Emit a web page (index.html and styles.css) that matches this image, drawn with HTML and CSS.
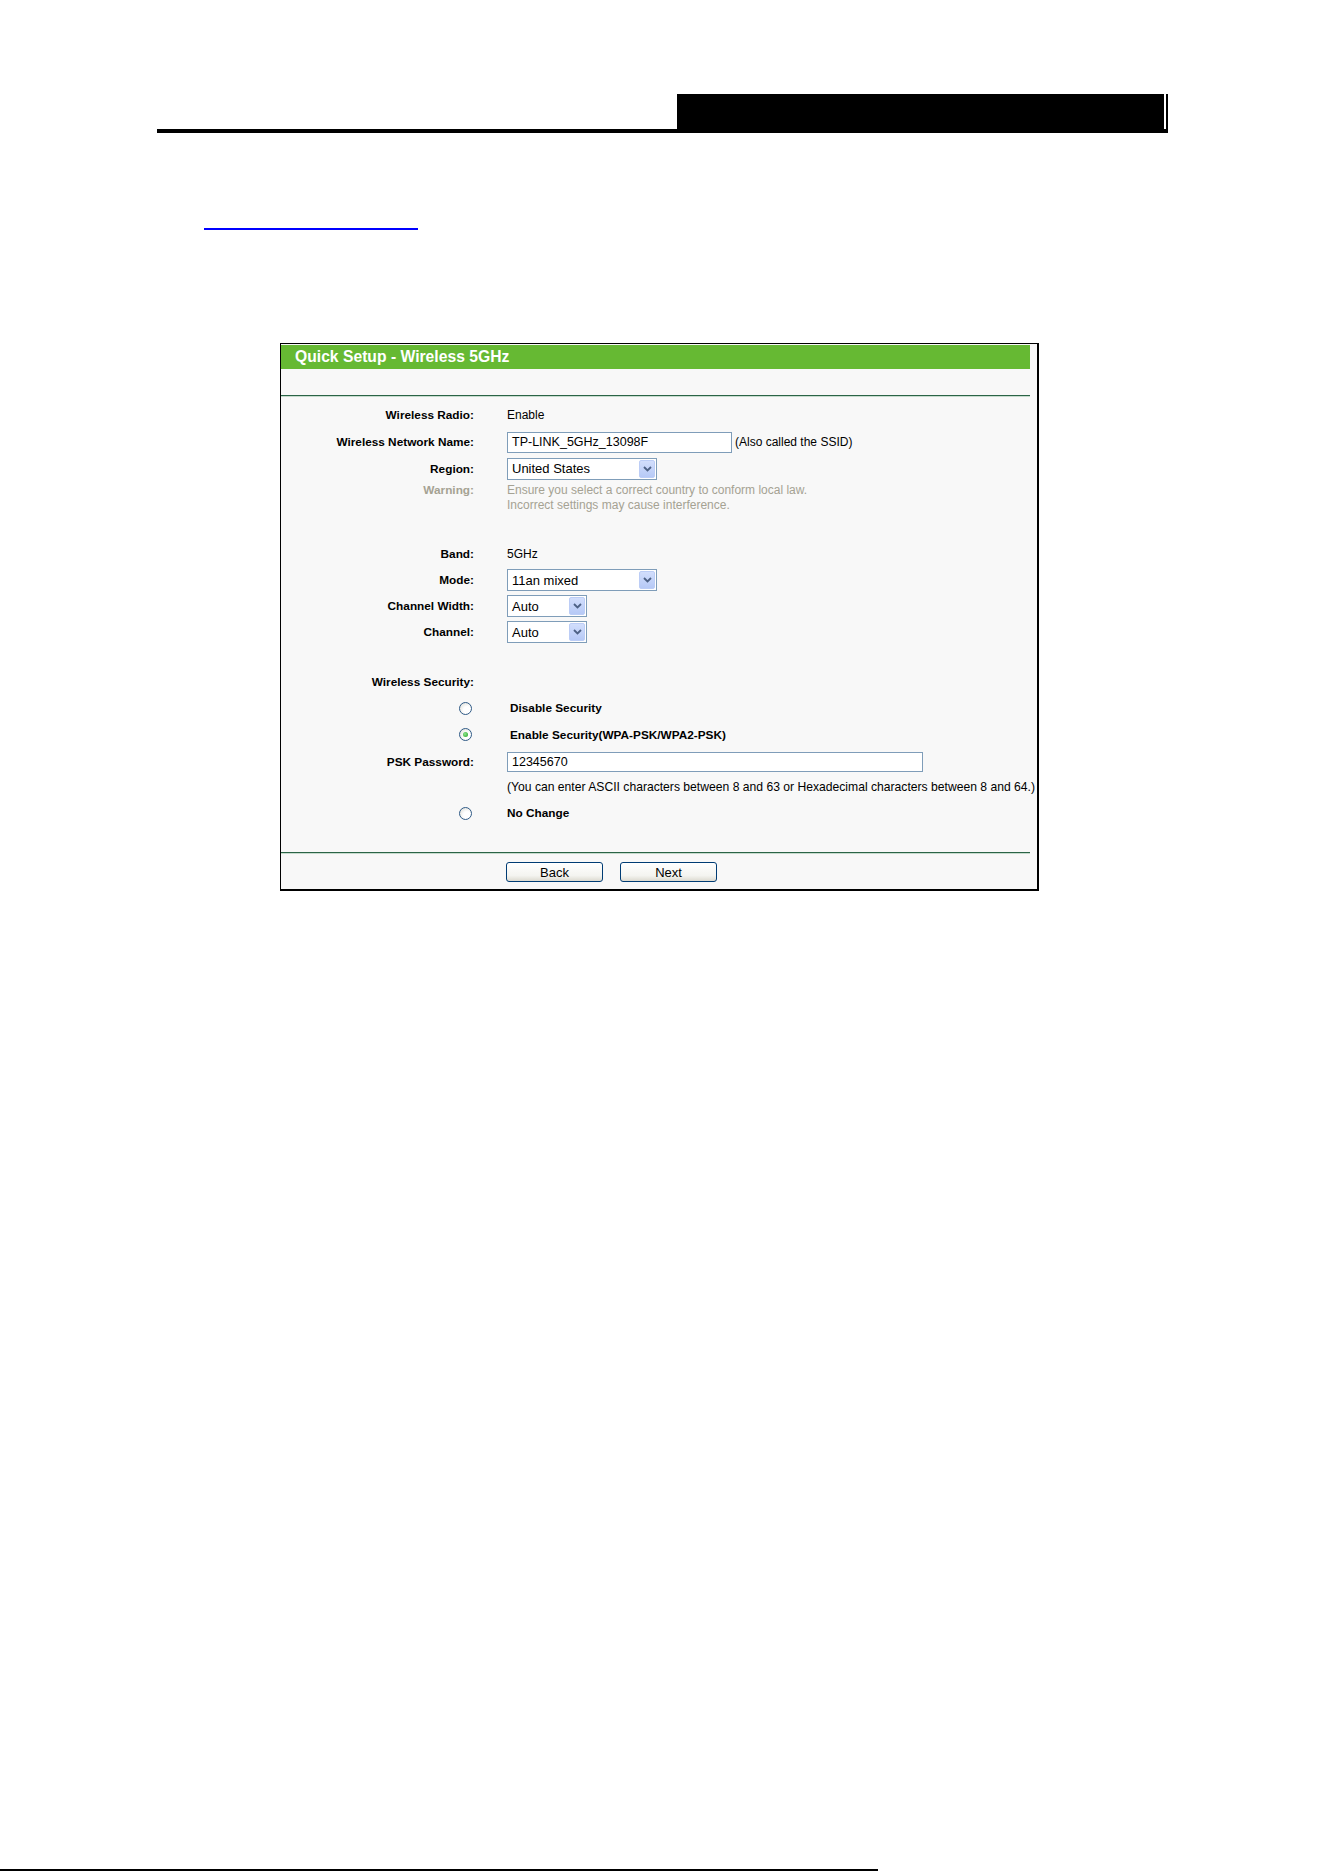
FILE: index.html
```html
<!DOCTYPE html>
<html lang="en">
<head>
    <meta charset="UTF-8">
    <meta name="viewport" content="width=device-width, initial-scale=1.0">
    <title>Quick Setup - Wireless 5GHz</title>
    <link rel="stylesheet" href="styles.css">
</head>
<body>
<div class="page">
    <header class="doc-head">
        <div class="doc-head__tab">
            <span class="doc-head__fill"></span>
            <span class="doc-head__edge"></span>
        </div>
    </header>

    <a class="doc-link" href="#"></a>

    <div class="frame">
        <div class="frame-title">Quick Setup - Wireless 5GHz</div>
        <div class="frame-rule frame-rule--top"></div>

        <div class="form">
            <div class="row row-radio">
                <span class="row__label">Wireless Radio:</span>
                <span class="row__value">Enable</span>
            </div>
            <div class="row row-wide">
                <span class="row__label">Wireless Network Name:</span>
                <span class="row__value">
                    <span class="field field--ssid">TP-LINK_5GHz_13098F</span>
                    <span class="field-note">(Also called the SSID)</span>
                </span>
            </div>
            <div class="row row-short">
                <span class="row__label">Region:</span>
                <span class="row__value">
                    <span class="select">
                        <span class="select__text">United States</span>
                        <span class="select__btn"><svg width="9" height="6" viewBox="0 0 9 6"><path d="M1 1l3.5 3.5L8 1" fill="none" stroke="#4d6185" stroke-width="1.8"/></svg></span>
                    </span>
                </span>
            </div>
            <div class="row row-warn">
                <span class="row__label">Warning:</span>
                <span class="row__value row__value--block">Ensure you select a correct country to conform local law.<br>Incorrect settings may cause interference.</span>
            </div>

            <div class="row gap-band">
                <span class="row__label">Band:</span>
                <span class="row__value">5GHz</span>
            </div>
            <div class="row">
                <span class="row__label">Mode:</span>
                <span class="row__value">
                    <span class="select">
                        <span class="select__text">11an mixed</span>
                        <span class="select__btn"><svg width="9" height="6" viewBox="0 0 9 6"><path d="M1 1l3.5 3.5L8 1" fill="none" stroke="#4d6185" stroke-width="1.8"/></svg></span>
                    </span>
                </span>
            </div>
            <div class="row">
                <span class="row__label">Channel Width:</span>
                <span class="row__value">
                    <span class="select select--short">
                        <span class="select__text">Auto</span>
                        <span class="select__btn"><svg width="9" height="6" viewBox="0 0 9 6"><path d="M1 1l3.5 3.5L8 1" fill="none" stroke="#4d6185" stroke-width="1.8"/></svg></span>
                    </span>
                </span>
            </div>
            <div class="row">
                <span class="row__label">Channel:</span>
                <span class="row__value">
                    <span class="select select--short">
                        <span class="select__text">Auto</span>
                        <span class="select__btn"><svg width="9" height="6" viewBox="0 0 9 6"><path d="M1 1l3.5 3.5L8 1" fill="none" stroke="#4d6185" stroke-width="1.8"/></svg></span>
                    </span>
                </span>
            </div>

            <div class="row gap-sec">
                <span class="row__label">Wireless Security:</span>
                <span class="row__value"></span>
            </div>
            <div class="row">
                <span class="radio"></span>
                <span class="row__value opt">Disable Security</span>
            </div>
            <div class="row row-radio">
                <span class="radio radio--on"></span>
                <span class="row__value opt">Enable Security(WPA-PSK/WPA2-PSK)</span>
            </div>
            <div class="row row-wide">
                <span class="row__label">PSK Password:</span>
                <span class="row__value">
                    <span class="field field--psk">12345670</span>
                </span>
            </div>
            <div class="row row-note">
                <span></span>
                <span class="row__value hint">(You can enter ASCII characters between 8 and 63 or Hexadecimal characters between 8 and 64.)</span>
            </div>
            <div class="row row-last">
                <span class="radio"></span>
                <span class="row__value opt opt--flush">No Change</span>
            </div>
        </div>

        <div class="frame-rule"></div>
        <div class="actions">
            <button class="btn" type="button">Back</button>
            <button class="btn" type="button">Next</button>
        </div>
    </div>

    <footer class="doc-foot"></footer>
</div>
</body>
</html>
```

FILE: styles.css
```css
body {
    margin: 0;
    background: #fff;
    color: #000;
    font-family: "Liberation Sans", Arial, sans-serif;
}
.page {
    min-height: 1872px;
    display: flex;
    flex-direction: column;
}

/* page header: black tab over a thick rule */
.doc-head {
    margin: 94px 0 0 157px;
    width: 1011px;
    border-bottom: 4px solid #000;
    display: flex;
    justify-content: flex-end;
}
.doc-head__tab {
    width: 491px;
    height: 35px;
    display: flex;
}
.doc-head__fill {
    flex: 1;
    background: #000;
}
.doc-head__edge {
    width: 2px;
    margin-left: 2px;
    background: #000;
}

.doc-link {
    display: block;
    margin: 95px 0 0 204px;
    width: 214px;
    border-bottom: 2px solid #0000ff;
}

/* router setup frame */
.frame {
    margin: 113px 0 0 280px;
    width: 756px;
    border: 1px solid #000;
    border-width: 1px 2px 2px 1px;
    background: #f8f8f8;
    padding: 1px 0 7px;
    font-size: 12px;
}
.frame-title {
    width: 749px;
    height: 24px;
    line-height: 24px;
    box-sizing: border-box;
    padding-left: 14px;
    background: #66b933;
    color: #fff;
    font-size: 15.7px;
    font-weight: bold;
}
.frame-rule {
    width: 749px;
    height: 1px;
    background: #2b6447;
    border-bottom: 1px solid #c6dbcd;
}
.frame-rule--top {
    margin-top: 26px;
}

.form {
    padding: 4px 0 24px;
}
.row {
    display: grid;
    grid-template-columns: 193px 1fr;
    column-gap: 33px;
    align-items: center;
    height: 26px;
}
.row-radio { height: 27px; }
.row-wide { height: 28px; }
.row-short { height: 25px; }
.row-note { height: 22px; }
.row-last { height: 30px; }
.row-warn {
    height: 33px;
    box-sizing: border-box;
    padding-top: 2px;
    align-items: start;
    line-height: 15px;
    color: #a5a293;
}
.gap-band { margin-top: 27px; }
.gap-sec { margin-top: 24px; }

.row__label {
    text-align: right;
    font-size: 11.8px;
    font-weight: bold;
    white-space: nowrap;
}
.row__value {
    display: flex;
    align-items: center;
    white-space: nowrap;
}
.row__value--block {
    display: block;
}
.opt {
    font-size: 11.8px;
    font-weight: bold;
    padding-left: 3px;
}
.opt--flush {
    padding-left: 0;
}
.hint {
    font-size: 12.15px;
}

/* text inputs */
.field {
    display: flex;
    align-items: center;
    height: 21px;
    box-sizing: border-box;
    padding: 0 4px;
    border: 1px solid #7f9db9;
    background: #fff;
    font-size: 12.5px;
}
.field--ssid { width: 225px; }
.field--psk {
    width: 416px;
    height: 20px;
}
.field-note {
    margin-left: 3px;
}

/* drop-down lists */
.select {
    display: flex;
    width: 150px;
    height: 22px;
    box-sizing: border-box;
    padding: 1px;
    border: 1px solid #7f9db9;
    background: #fff;
    font-size: 13px;
}
.select--short { width: 80px; }
.select__text {
    flex: 1;
    display: flex;
    align-items: center;
    padding-left: 3px;
}
.select__btn {
    width: 16px;
    display: flex;
    align-items: center;
    justify-content: center;
    box-sizing: border-box;
    border: 1px solid #bccdf6;
    border-radius: 2px;
    background: linear-gradient(#d2defc, #b6c9f6);
}

/* radio buttons */
.radio {
    justify-self: end;
    margin-right: 2px;
    width: 13px;
    height: 13px;
    box-sizing: border-box;
    border-radius: 50%;
    border: 1px solid #2f5a86;
    background: radial-gradient(circle at 65% 65%, #fff 35%, #d9d9d2);
    display: flex;
    align-items: center;
    justify-content: center;
}
.radio--on::after {
    content: "";
    width: 5px;
    height: 5px;
    border-radius: 50%;
    background: radial-gradient(circle at 40% 40%, #8ee58e, #21a121);
}

/* bottom buttons */
.actions {
    display: flex;
    gap: 17px;
    padding: 8px 0 0 225px;
}
.btn {
    width: 97px;
    height: 20px;
    padding: 0;
    border: 1px solid #003c74;
    border-radius: 3px;
    background: linear-gradient(#fff, #f4f4f0 70%, #dcdad0);
    color: #000;
    font-family: "Liberation Sans", Arial, sans-serif;
    font-size: 13px;
    cursor: pointer;
}

.doc-foot {
    margin-top: auto;
    margin-bottom: 1px;
    width: 878px;
    height: 2px;
    background: #000;
}
```
